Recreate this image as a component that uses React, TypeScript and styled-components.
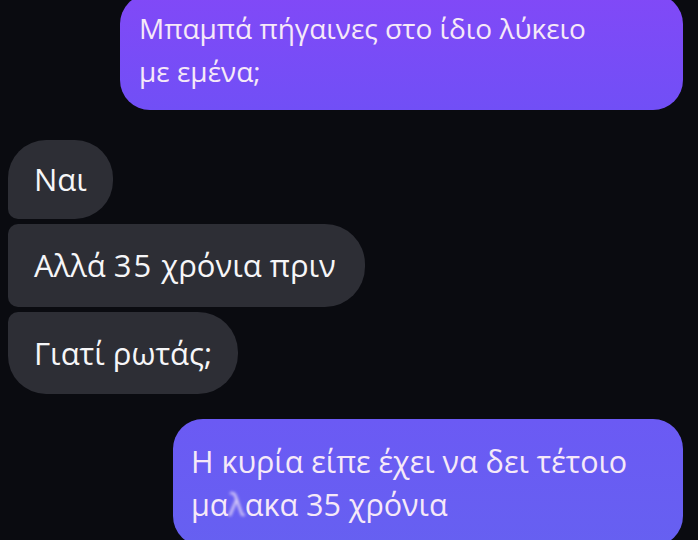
import React from "react";
import styled, { createGlobalStyle, css } from "styled-components";

const Global = createGlobalStyle`
  html, body {
    margin: 0;
    padding: 0;
    background: #0a0b10;
    height: 540px;
    overflow: hidden;
  }
  body {
    font-family: "Open Sans", "Noto Sans", sans-serif;
  }
`;

const Chat = styled.div`
  display: flex;
  flex-direction: column;
  padding: 0 15px 0 8px;
  width: 698px;
  height: 540px;
  box-sizing: border-box;
  background: #0a0b10;
`;

type Corners = { tl: number; tr: number; br: number; bl: number };

const Bubble = styled.div<{
  $out?: boolean;
  $w?: number;
  $r: Corners;
  $mt?: number;
  $pt?: number;
  $pb?: number;
  $px?: number;
  $fs?: number;
}>`
  box-sizing: border-box;
  align-self: ${(p) => (p.$out ? "flex-end" : "flex-start")};
  width: ${(p) => (p.$w ? `${p.$w}px` : "auto")};
  margin-top: ${(p) => p.$mt ?? 0}px;
  padding: ${(p) => p.$pt ?? 18}px ${(p) => p.$px ?? 26}px ${(p) => p.$pb ?? 18}px;
  border-radius: ${(p) => `${p.$r.tl}px ${p.$r.tr}px ${p.$r.br}px ${p.$r.bl}px`};
  font-size: ${(p) => p.$fs ?? 31}px;
  line-height: 43px;
  white-space: nowrap;
  ${(p) =>
    p.$out
      ? css`
          color: #f6e9f8;
          background: linear-gradient(180deg, #8149f7 0%, #714ff6 100%);
        `
      : css`
          color: #f6f6f8;
          background: #2d2e35;
        `}
`;

const OutBubble2 = styled(Bubble)`
  background: linear-gradient(180deg, #6b5af4 0%, #6660f1 100%);
`;

const Digits = styled.span`
  letter-spacing: 2px;
`;

const Blur = styled.span`
  filter: blur(1.6px);
  display: inline-block;
  opacity: 0.85;
`;

export default function App() {
  return (
    <>
      <Global />
      <Chat>
        <Bubble $out $w={563} $mt={-6} $pt={13} $pb={17} $px={19} $fs={28} $r={{ tl: 30, tr: 30, br: 30, bl: 30 }}>
          Μπαμπά πήγαινες στο ίδιο λύκειο
          <br />
          με εμένα;
        </Bubble>
        <Bubble $mt={30} $r={{ tl: 38, tr: 38, br: 38, bl: 10 }}>
          Ναι
        </Bubble>
        <Bubble $w={357} $mt={5} $pt={20} $pb={20} $r={{ tl: 10, tr: 40, br: 40, bl: 10 }}>
          Αλλά <Digits>35</Digits> χρόνια πριν
        </Bubble>
        <Bubble $mt={5} $pt={20} $pb={19} $r={{ tl: 10, tr: 40, br: 40, bl: 38 }}>
          Γιατί ρωτάς;
        </Bubble>
        <OutBubble2 $out $w={510} $mt={25} $pt={21} $pb={20} $px={18} $fs={30.5} $r={{ tl: 30, tr: 30, br: 30, bl: 30 }}>
          Η κυρία είπε έχει να δει τέτοιο
          <br />
          μα<Blur>λ</Blur>ακα 35 χρόνια
        </OutBubble2>
      </Chat>
    </>
  );
}
